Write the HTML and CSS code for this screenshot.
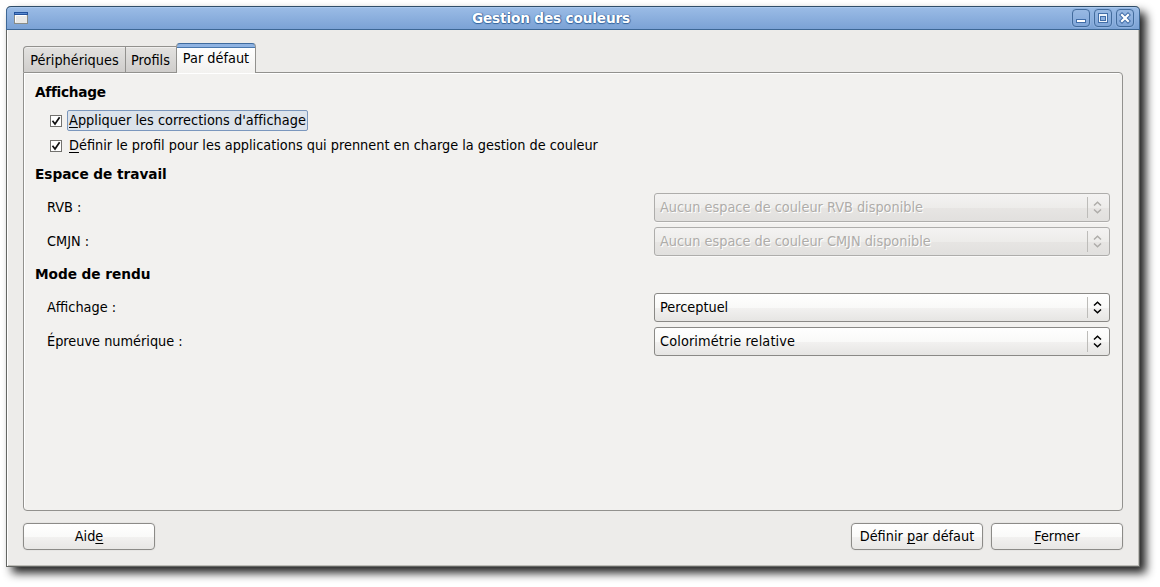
FILE: index.html
```html
<!DOCTYPE html>
<html lang="fr">
<head>
<meta charset="utf-8">
<title>Gestion des couleurs</title>
<link rel="stylesheet" href="styles.css">
</head>
<body>
<div class="window">
  <header class="titlebar">
    <svg class="app-icon" width="14" height="12" viewBox="0 0 14 12"><rect x=".5" y=".5" width="13" height="11" fill="#e9e9e7" stroke="#8a8d88"/><path d="M0 0h14v3H0z" fill="#23529c"/><path d="M1 1h12v1H1z" fill="#5b8bd0"/><path d="M1.500 10V3.500H12" fill="none" stroke="#fff"/></svg>
    <h1 class="title">Gestion des couleurs</h1>
    <div class="controls">
      <span class="control"><svg width="16" height="16" viewBox="0 0 16 16"><rect x="3.500" y="9.500" width="9" height="3" fill="#fff" stroke="#426ea8"/></svg></span>
      <span class="control"><svg width="16" height="16" viewBox="0 0 16 16"><path d="M3 3h10v10H3z" fill="#426ea8"/><path d="M4 4h8v8H4z" fill="#edf3fb"/><path d="M5 6h6v5H5z" fill="#426ea8"/><path d="M6 7h4v3H6z" fill="#8db0df"/></svg></span>
      <span class="control"><svg width="16" height="16" viewBox="0 0 16 16"><path d="M5 5l6 6M11 5l-6 6" stroke="#426ea8" stroke-width="4.200" stroke-linecap="square"/><path d="M5 5l6 6M11 5l-6 6" stroke="#fff" stroke-width="2.200" stroke-linecap="square"/></svg></span>
    </div>
  </header>
  <main class="content">
    <nav class="tabs">
      <div class="tab tab-first">Périphériques</div>
      <div class="tab tab-second">Profils</div>
      <div class="tab tab-active">Par défaut</div>
    </nav>
    <section class="panel">
      <h2>Affichage</h2>
      <label class="check"><span class="box"><svg width="12" height="12" viewBox="0 0 12 12"><path d="M2.500 5.800l2.500 3.200L9.600 2.200" fill="none" stroke="#111" stroke-width="1.700"/></svg></span><span class="check-text focused"><u>A</u>ppliquer les corrections d'affichage</span></label>
      <label class="check"><span class="box"><svg width="12" height="12" viewBox="0 0 12 12"><path d="M2.500 5.800l2.500 3.200L9.600 2.200" fill="none" stroke="#111" stroke-width="1.700"/></svg></span><span class="check-text"><u>D</u>éfinir le profil pour les applications qui prennent en charge la gestion de couleur</span></label>
      <h2 class="wide">Espace de travail</h2>
      <div class="rows">
        <div class="row"><span>RVB :</span><div class="combo disabled"><span>Aucun espace de couleur RVB disponible</span><i><svg width="9" height="13" viewBox="0 0 9 13"><path d="M1 4.500L4.500 1.200L8 4.500M1 8.500l3.500 3.300L8 8.500" fill="none" stroke="currentColor" stroke-width="1.500"/></svg></i></div></div>
        <div class="row"><span>CMJN :</span><div class="combo disabled"><span>Aucun espace de couleur CMJN disponible</span><i><svg width="9" height="13" viewBox="0 0 9 13"><path d="M1 4.500L4.500 1.200L8 4.500M1 8.500l3.500 3.300L8 8.500" fill="none" stroke="currentColor" stroke-width="1.500"/></svg></i></div></div>
      </div>
      <h2 class="wide">Mode de rendu</h2>
      <div class="rows">
        <div class="row"><span>Affichage :</span><div class="combo"><span>Perceptuel</span><i><svg width="9" height="13" viewBox="0 0 9 13"><path d="M1 4.500L4.500 1.200L8 4.500M1 8.500l3.500 3.300L8 8.500" fill="none" stroke="currentColor" stroke-width="1.500"/></svg></i></div></div>
        <div class="row"><span>Épreuve numérique :</span><div class="combo"><span class="loose">Colorimétrie relative</span><i><svg width="9" height="13" viewBox="0 0 9 13"><path d="M1 4.500L4.500 1.200L8 4.500M1 8.500l3.500 3.300L8 8.500" fill="none" stroke="currentColor" stroke-width="1.500"/></svg></i></div></div>
      </div>
    </section>
    <footer class="actions">
      <button class="button help">Aid<u>e</u></button>
      <button class="button">Définir <u>p</u>ar défaut</button>
      <button class="button"><u>F</u>ermer</button>
    </footer>
  </main>
</div>
</body>
</html>
```
FILE: styles.css
```css
* { box-sizing: border-box; }
body {
  margin: 0;
  padding: 6px;
  height: 587px;
  overflow: hidden;
  background: #fff;
  color: #000;
  font: 14.35px/18px "DejaVu Sans Condensed", "DejaVu Sans", sans-serif;
  font-stretch: condensed;
}
u { text-decoration-thickness: 1px; text-underline-offset: 2px; text-decoration-skip-ink: none; }
.window {
  display: flex;
  flex-direction: column;
  width: 1134px;
  height: 561px;
  border: 1px solid #646663;
  border-top: 0;
  border-radius: 5px 5px 0 0;
  background: #edecea;
  box-shadow: 6px 6px 10px #222, inset 1px 0 #fff, inset -1px -1px #bebdb8;
}
.titlebar {
  flex: none;
  display: flex;
  align-items: center;
  height: 24px;
  margin: 0 -1px;
  padding: 0 5px 0 7px;
  border: 1px solid #3d6795;
  border-top-color: #2f4d69;
  border-radius: 5px 5px 0 0;
  background: linear-gradient(#9bbce6, #7ba2d5);
  box-shadow: inset 0 1px #a9c7ec;
}
.app-icon { flex: none; }
.title, h2 {
  margin: 0;
  font: bold 13.7px/18px "DejaVu Sans", sans-serif;
  font-stretch: normal;
  letter-spacing: -0.18px;
}
.title {
  flex: 1;
  margin-left: 2px;
  text-align: center;
  color: #fff;
  text-shadow: 0 0 1px #34659f, 0 1px 1px #34659f, 1px 0 1px #34659f;
}
.controls { display: flex; gap: 4px; }
.control {
  display: flex;
  width: 18px;
  height: 18px;
  border: 1px solid #426b9c;
  border-radius: 4px;
  background: linear-gradient(#98b9e3, #80a6d8);
  box-shadow: 0 0 0 1px #90b3e0;
}
.content { display: flex; flex-direction: column; padding: 13px 16px 16px; flex: 1; }
.tabs { display: flex; align-items: flex-end; height: 30px; margin-bottom: -1px; position: relative; }
.tab {
  height: 26px;
  margin-bottom: 1px;
  padding-top: 4px;
  border: 1px solid #92918e;
  border-bottom: 0;
  text-align: center;
  background: linear-gradient(#e3e2e0, #cfcdcb);
  box-shadow: inset 0 1px #f0efee;
}
.tab-first { width: 103px; border-radius: 4px 0 0 0; }
.tab-second { width: 50px; border-width: 1px 0 0; padding-right: 1px; }
.tab-active {
  width: 80px;
  height: 30px;
  margin-bottom: 0;
  padding-top: 5px;
  border-top: 1px solid #3f6b9e;
  border-radius: 4px 4px 0 0;
  background: linear-gradient(#8fb3e2 3px, #4a78ad 3px 4px, #fff 4px, #f2f1ef);
  box-shadow: none;
}
.panel {
  flex: none;
  height: 439px;
  padding: 10px 12px 0 11px;
  border: 1px solid #92918e;
  border-radius: 0 4px 4px 4px;
  background: #f2f1ef;
  box-shadow: inset 1px 1px #fff;
}
h2 { height: 18px; letter-spacing: -0.3px; }
.wide { letter-spacing: -0.05px; }
.check { display: flex; align-items: center; height: 21px; margin: 9px 0 0 15px; }
.check + .check { margin: 4px 0 9px 15px; }
.box { display: flex; width: 12px; height: 12px; margin: 1px 5px 0 0; border: 1px solid #73726f; background: #fff; }
.box svg { flex: none; margin: -1px; }
.check-text { height: 21px; padding: 0 1px; border: 1px solid transparent; border-radius: 2px; }
.focused { border-color: #7b97bd; background: #dce3eb; letter-spacing: 0.035px; }
.rows { display: flex; flex-direction: column; gap: 5px; margin: 10px 0 9px; padding-left: 12px; }
.row { display: flex; align-items: center; justify-content: space-between; height: 29px; }
.row span { padding-bottom: 2px; }
.loose { letter-spacing: 0.13px; }
.combo {
  display: flex;
  align-items: center;
  justify-content: space-between;
  width: 456px;
  height: 29px;
  padding: 0 7px 0 5px;
  border: 1px solid #8a8986;
  border-radius: 3px;
  background: linear-gradient(#fff, #f9f9f8 50%, #f2f1f0 52%, #e6e5e3);
}
.combo i { display: flex; align-items: center; height: 21px; padding-left: 5px; border-left: 1px solid #bdbcb9; }
.disabled {
  border-color: #aeadab;
  color: #aeaca9;
  background: linear-gradient(#f4f3f2, #edecea 50%, #e7e5e3 52%, #e1e0de);
  text-shadow: 1px 1px #fff;
  box-shadow: 0 1px #faf9f8;
}
.actions { display: flex; gap: 8px; margin-top: 12px; }
.button {
  width: 132px;
  height: 27px;
  padding: 0 0 1px;
  border: 1px solid #8c8b88;
  border-radius: 4px;
  background: linear-gradient(#fff, #fafaf9 50%, #f2f1f0 52%, #e8e7e5);
  box-shadow: 0 0 0 1px #e6e5e3;
  color: inherit;
  font: inherit;
}
.help { margin-right: auto; }
```
